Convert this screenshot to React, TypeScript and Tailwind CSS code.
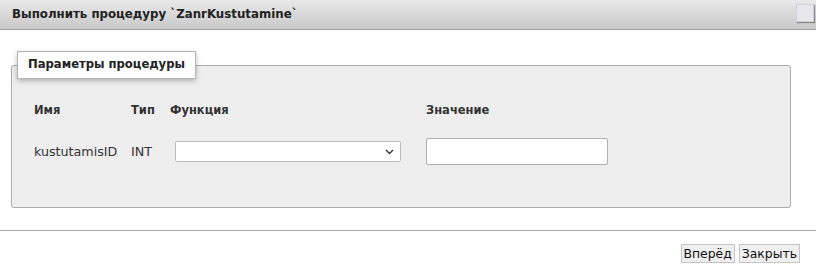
import React from "react";

const font = { fontFamily: '"DejaVu Sans", Verdana, sans-serif' };

export default function App() {
  return (
    <div className="w-[816px] h-[273px] bg-white text-[12.7px] text-[#333]" style={font}>
      <div className="h-[30px] flex items-center justify-between pl-[12px] pr-[2px] border-b border-[#a4a4a4] bg-gradient-to-b from-[#e9e9e9] to-[#c9c9c9]">
        <span className="font-bold text-[11.8px] text-[#222]">Выполнить процедуру `ZanrKustutamine`</span>
        <span className="w-[18px] h-[18px] bg-[#e6e6ec] border border-[#d0d0d6] shadow-[1px_1px_1px_rgba(0,0,0,0.35)] mb-[3px]" />
      </div>

      <div className="pt-[21px] pl-[11px] pr-[25px]">
        <fieldset className="border border-[#ababab] rounded-[3px] bg-[#eeeeee] px-[5px] pb-[42px]">
          <legend className="bg-white border border-[#b4b4b4] shadow-[0_2px_5px_rgba(0,0,0,0.25)] px-[10px] h-[28px] flex items-center font-bold text-[11.6px] text-[#222]">
            Параметры процедуры
          </legend>
          <div className="grid grid-cols-[97px_39px_256px_auto] items-center pl-[17px] pt-[23px] gap-y-[19px]">
            <span className="font-bold text-[11.5px]">Имя</span>
            <span className="font-bold text-[11.5px]">Тип</span>
            <span className="font-bold text-[11.5px]">Функция</span>
            <span className="font-bold text-[11.5px]">Значение</span>

            <span>kustutamisID</span>
            <span>INT</span>
            <div className="ml-[5px] w-[226px] h-[21px] bg-white border border-[#bdbdbd] rounded-[2px] flex items-center justify-end pr-[6px]">
              <svg width="9" height="6" viewBox="0 0 9 6" className="text-[#333]">
                <path d="M1 1l3.5 3.5L8 1" fill="none" stroke="currentColor" strokeWidth="1.4" />
              </svg>
            </div>
            <div className="w-[182px] h-[27px] bg-white border border-[#aeaeae] rounded-[2px]" />
          </div>
        </fieldset>
      </div>

      <div className="mt-[22px] border-t border-[#aaaaaa] flex justify-end gap-[4px] pt-[13px] pr-[16px]">
        <button className="h-[19px] px-[2px] bg-[#efefef] border border-[#c4c4c4] text-[12.4px] text-[#111] leading-none" style={font}>Вперёд</button>
        <button className="h-[19px] px-[2px] bg-[#efefef] border border-[#c4c4c4] text-[12.4px] text-[#111] leading-none" style={font}>Закрыть</button>
      </div>
    </div>
  );
}
